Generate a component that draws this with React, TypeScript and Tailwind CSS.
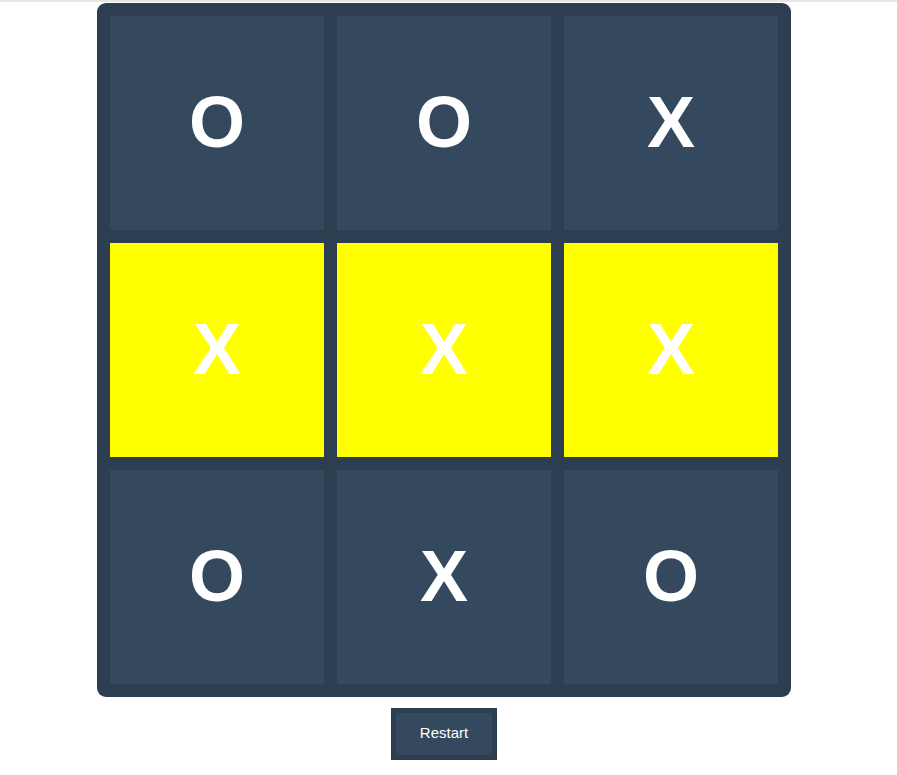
const board = ['O', 'O', 'X', 'X', 'X', 'X', 'O', 'X', 'O']
const winLine = [3, 4, 5]

export default function App() {
  return (
    <div className="min-h-[775px] bg-white font-['Liberation_Sans',Arial,sans-serif]">
      <div className="h-[3px] w-full border-t-2 border-[#e6e6e6]" />
      <div className="flex w-[888px] flex-col items-center">
        <div className="grid grid-cols-[repeat(3,214px)] grid-rows-[repeat(3,214px)] gap-[13px] rounded-[9px] bg-[#2c3e50] p-[13px]">
          {board.map((v, i) => (
            <div
              key={i}
              className={`flex items-center justify-center pb-[3px] text-[72px] font-bold leading-none text-white ${
                winLine.includes(i) ? 'bg-[#ffff00]' : 'bg-[#34495e]'
              }`}
            >
              {v}
            </div>
          ))}
        </div>
        <button className="mt-[11px] flex h-[52px] w-[106px] items-center justify-center border-[5px] border-[#2c3e50] bg-[#34495e] pb-[2px] text-[15px] text-white">
          Restart
        </button>
      </div>
    </div>
  )
}
